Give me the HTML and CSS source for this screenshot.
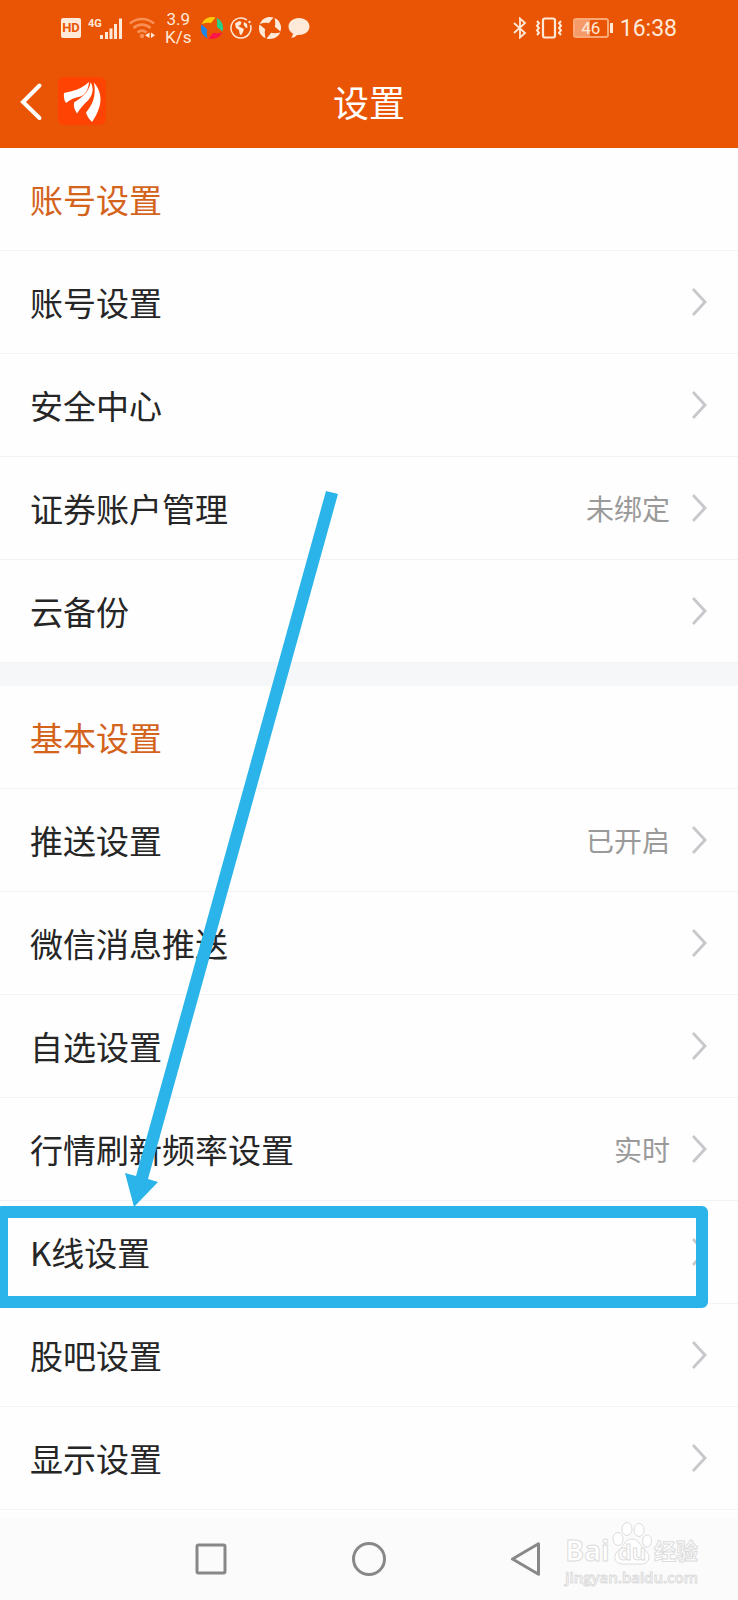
FILE: index.html
```html
<!DOCTYPE html>
<html lang="zh-CN">
<head>
    <meta charset="utf-8">
    <meta name="viewport" content="width=device-width, initial-scale=1">
    <title>设置</title>
    <link rel="stylesheet" href="styles.css">
</head>
<body>
    <header>
        <div class="status-bar">
            <div class="status-left">
                <div class="hd">HD</div>
                <svg width="34" height="24" viewBox="0 0 34 24">
                    <text x="0" y="11" class="net">4G</text>
                    <path d="M13.500 23v-4M18.500 23v-7M23 23v-10.500M27.500 23v-15M32.500 23V2.500" stroke="#ffe9d9" stroke-width="3"/>
                </svg>
                <svg width="26" height="24" viewBox="0 0 26 24">
                    <g fill="none" stroke="#f89055" stroke-width="2.600">
                        <path d="M1 7.500c7-6 17-6 24 0"/>
                        <path d="M4.500 12c5-4.500 12-4.500 17 0"/>
                        <path d="M8.500 16.500c3-2.500 6-2.500 9 0"/>
                    </g>
                    <circle cx="13" cy="20" r="2.200" fill="#f89055"/>
                    <path d="M20.500 16.500v5.500L16 19.200zM22 16.500v5.500l4-2.800z" fill="#ffe9d9"/>
                </svg>
                <div class="speed">3.9<br>K/s</div>
                <svg width="22" height="22" viewBox="0 0 22 22">
                    <path d="M.8 7C3 1.500 9-1.200 14.500.600L9.800 6.200C7 5.500 4 6 .8 7z" fill="#ffca0a"/>
                    <path d="M15.500 1C21 3.200 23.200 9 21.400 14.500L15.800 9.800C16.500 7 16.300 4 15.500 1z" fill="#25d08a"/>
                    <path d="M21.200 15.500C19 20.500 13 23.200 7.500 21.400L12.200 15.800C15 16.500 18 16.300 21.200 15.500z" fill="#fb1549"/>
                    <path d="M6.500 21C1 19-1.200 13 .6 7.500L6.200 12.200C5.500 15 5.700 18 6.500 21z" fill="#1b86e8"/>
                </svg>
                <svg width="22" height="22" viewBox="0 0 22 22">
                    <path d="M17 3a10 10 0 1 0 3.500 5" fill="none" stroke="#ffe9d9" stroke-width="1.500"/>
                    <circle cx="19.500" cy="5" r="1.200" fill="#ffe9d9"/>
                    <path d="M5 6.500l4-2.500 2.500 1-1 3-2.500 1 3 1.500 3 1.500-1 3-2 3.500-1.500-2-.5-3.500-3-2z M14 5l3 2 .5 4-2-.5-2-3z" fill="#ffe9d9"/>
                </svg>
                <svg width="22" height="22" viewBox="0 0 22 22" fill="#ffe9d9">
                    <path d="M.8 7C3 1.500 9-1.200 14.500.600L9.800 6.200C7 5.500 4 6 .8 7z"/>
                    <path d="M15.500 1C21 3.200 23.200 9 21.400 14.500L15.800 9.800C16.500 7 16.300 4 15.500 1z"/>
                    <path d="M21.200 15.500C19 20.500 13 23.200 7.500 21.400L12.200 15.800C15 16.500 18 16.300 21.200 15.500z"/>
                    <path d="M6.500 21C1 19-1.200 13 .6 7.500L6.200 12.200C5.500 15 5.700 18 6.500 21z"/>
                </svg>
                <svg width="22" height="22" viewBox="0 0 22 22">
                    <path d="M11 1C5 1 .500 4.700.500 9.500c0 3 1.700 5.500 4.300 7 .3 1.500-.6 3-1.800 4 2.500.2 4.700-.8 6-2.600l2 .100c6 0 10.500-3.700 10.500-8.500S17 1 11 1z" fill="#ffe9d9"/>
                </svg>
            </div>
            <div class="status-right">
                <svg width="14" height="22" viewBox="0 0 14 22">
                    <path d="M1 6l11 10-5 4.500v-19L12 6 1 16" fill="none" stroke="#ffe9d9" stroke-width="1.800"/>
                </svg>
                <svg width="28" height="22" viewBox="0 0 28 22" fill="none" stroke="#ffe9d9">
                    <rect x="8" y="1.500" width="12" height="19" rx="2" stroke-width="2.200"/>
                    <path d="M2 4l2 2.300-2 2.400 2 2.300-2 2.400 2 2.300-2 2.300M26 4l-2 2.300 2 2.400-2 2.300 2 2.400-2 2.300 2 2.300" stroke-width="2"/>
                </svg>
                <div class="battery">46</div>
                <time>16:38</time>
            </div>
        </div>
        <div class="title-bar">
            <div class="title-left">
                <button class="back" aria-label="返回">
                    <svg width="24" height="40" viewBox="0 0 24 40">
                        <path d="M19.500 4.500L3 21l16.500 16" fill="none" stroke="#fff" stroke-width="4" stroke-linecap="round"/>
                    </svg>
                </button>
                <svg width="48" height="48" viewBox="0 0 48 48">
                    <rect width="48" height="48" rx="6" fill="#ff4303"/>
                    <g fill="#fff">
                        <path d="M6 16c9-1.500 18-4.500 25-11-.5 8-4 13-8.500 14.500C17 20.500 12 22.500 8 26 6 23 5.500 19.500 6 16z"/>
                        <path d="M16 25.500c7-4.500 14.500-9 16.700-20.200C36 11.500 35 18 30 23.500c-4.500 4-8 8-11 13-2.500-3.500-3.500-7-3-11z"/>
                        <path d="M36 5.500c6 7 8 15.500 5.500 24-1.500 5.500-4.500 11-7.500 15.500-3-3-5-6-6-9.500 6-7.500 10.500-15 8-30z"/>
                    </g>
                </svg>
            </div>
            <h1>设置</h1>
        </div>
    </header>

    <main>
        <section>
            <h2>账号设置</h2>
            <a class="row" href="#"><span>账号设置</span><i class="chevron"></i></a>
            <a class="row" href="#"><span>安全中心</span><i class="chevron"></i></a>
            <a class="row" href="#"><span>证券账户管理</span><em>未绑定</em><i class="chevron"></i></a>
            <a class="row" href="#"><span>云备份</span><i class="chevron"></i></a>
        </section>
        <section>
            <h2>基本设置</h2>
            <a class="row" href="#"><span>推送设置</span><em>已开启</em><i class="chevron"></i></a>
            <a class="row" href="#"><span>微信消息推送</span><i class="chevron"></i></a>
            <a class="row" href="#"><span>自选设置</span><i class="chevron"></i></a>
            <a class="row" href="#"><span>行情刷新频率设置</span><em>实时</em><i class="chevron"></i></a>
            <a class="row marked" href="#">
                <span>K线设置</span><i class="chevron"></i>
                <svg class="arrow" width="220" height="716" viewBox="0 0 220 716">
                    <path d="M206 0l12 3L28 688l10 3-24 25-9-34 11 3z" fill="#2ab4e9"/>
                </svg>
            </a>
            <a class="row" href="#"><span>股吧设置</span><i class="chevron"></i></a>
            <a class="row" href="#"><span>显示设置</span><i class="chevron"></i></a>
        </section>
    </main>

    <nav>
        <button aria-label="最近任务">
            <svg width="34" height="34" viewBox="0 0 34 34"><rect x="3" y="3" width="28" height="28" rx="1.500"/></svg>
        </button>
        <button aria-label="主页">
            <svg width="34" height="34" viewBox="0 0 34 34"><circle cx="17" cy="17" r="15.500"/></svg>
        </button>
        <button aria-label="返回上一级">
            <svg width="34" height="34" viewBox="0 0 34 34"><path d="M2.500 17L28.500 1.800v30.400z"/></svg>
        </button>
        <div class="watermark">
            <div class="brand">
                <span>Bai</span>
                <svg width="40" height="44" viewBox="0 0 40 44">
                    <ellipse cx="6" cy="17" rx="5" ry="6.500"/>
                    <ellipse cx="15" cy="7" rx="5" ry="6.500"/>
                    <ellipse cx="27" cy="8" rx="5" ry="6.500"/>
                    <ellipse cx="35" cy="19" rx="4.500" ry="6"/>
                    <path d="M20 17c7 0 8 7 13 11 7 6 4 14-4 14H11c-9 0-11-9-4-14 5-4 6-11 13-11z"/>
                    <text x="20" y="38" text-anchor="middle">du</text>
                </svg>
                <span class="cn">经验</span>
            </div>
            <div class="site">jingyan.baidu.com</div>
        </div>
    </nav>
</body>
</html>
```

FILE: styles.css
```css
* {
    box-sizing: border-box;
}

body {
    font-family: "Noto Sans CJK SC", sans-serif;
    background-color: #fefefe;
    color: #262626;
    display: flex;
    flex-direction: column;
    min-height: 100vh;
    margin: 0;
}

svg {
    display: block;
    flex: none;
}

button {
    background: none;
    border: 0;
    padding: 0;
    cursor: pointer;
}

header {
    background-color: #e95504;
    color: #fff;
}

.status-bar {
    display: flex;
    justify-content: space-between;
    align-items: center;
    height: 56px;
    padding: 0 61px;
    font-family: Roboto, sans-serif;
    color: #ffe9d9;
}

.status-left,
.status-right {
    display: flex;
    align-items: center;
    gap: 7px;
}

.status-right {
    gap: 8px;
}

.hd {
    width: 20px;
    height: 20px;
    border-radius: 2px;
    background-color: #ffe9d9;
    color: #e95504;
    font-size: 13px;
    font-weight: 700;
    line-height: 20px;
    text-align: center;
}

.net {
    font: 700 11px Roboto, sans-serif;
    fill: #ffe9d9;
}

.speed {
    font-size: 17px;
    line-height: 18px;
    text-align: center;
    margin: 0 3px;
}

.battery {
    position: relative;
    width: 36px;
    height: 20px;
    margin: 0 3px 0 2px;
    border: 2px solid #f9a878;
    border-radius: 3px;
    background: linear-gradient(to right, #f59a69 46%, transparent 46%);
    font-size: 17px;
    line-height: 16px;
    text-align: center;
}

.battery::after {
    content: "";
    position: absolute;
    right: -6px;
    top: 3px;
    width: 3px;
    height: 10px;
    background-color: #ffe9d9;
}

.status-bar time {
    font-size: 23px;
}

.title-bar {
    display: grid;
    grid-template-columns: 1fr auto 1fr;
    align-items: center;
    height: 92px;
    padding: 0 20px 2px;
}

.title-left {
    display: flex;
    align-items: center;
    gap: 14px;
}

h1 {
    font-size: 36px;
    font-weight: 400;
    margin: 0;
}

main {
    flex: 1;
}

section + section {
    border-top: 23px solid #f6f7f9;
}

h2,
.row {
    display: flex;
    align-items: center;
    height: 103px;
    margin: 0;
    padding: 0 31px 0 30px;
    border-bottom: 1px solid #f3f3f3;
    font-size: 33px;
    font-weight: 400;
    color: #262626;
    text-decoration: none;
}

h2 {
    color: #d4631c;
}

.row span {
    flex: 1;
}

.row em {
    font-size: 28px;
    font-style: normal;
    color: #9a9a9a;
    margin-right: 15px;
}

.chevron {
    width: 22px;
    height: 28px;
    background-color: #c8c8cc;
    clip-path: polygon(7px 2px, 9px 0, 22px 14px, 9px 28px, 7px 26px, 18px 14px);
}

.marked {
    position: relative;
}

.marked::after {
    content: "";
    position: absolute;
    top: 5px;
    right: 30px;
    bottom: -5px;
    left: -4px;
    border: 12px solid #2ab4e9;
    border-radius: 6px;
}

.arrow {
    position: absolute;
    left: 120px;
    bottom: 96px;
}

nav {
    position: relative;
    display: flex;
    justify-content: center;
    align-items: center;
    gap: 124px;
    height: 82px;
    background-color: #fbfbfb;
}

nav button svg {
    fill: none;
    stroke: #888;
    stroke-width: 3;
    stroke-linejoin: round;
}

.watermark {
    position: absolute;
    right: 40px;
    bottom: 12px;
    font-family: "Open Sans", "Noto Sans CJK SC", sans-serif;
    color: #fff;
    -webkit-text-stroke: 1px #dcdcdc;
}

.brand {
    display: flex;
    justify-content: space-between;
    align-items: flex-end;
    font-size: 28px;
    font-weight: 700;
    line-height: 32px;
}

.brand .cn {
    font-size: 22px;
}

.brand svg {
    fill: #fff;
    stroke: #dcdcdc;
}

.brand text {
    font-size: 22px;
}

.site {
    font-size: 15px;
    font-weight: 600;
    line-height: 22px;
}
```
